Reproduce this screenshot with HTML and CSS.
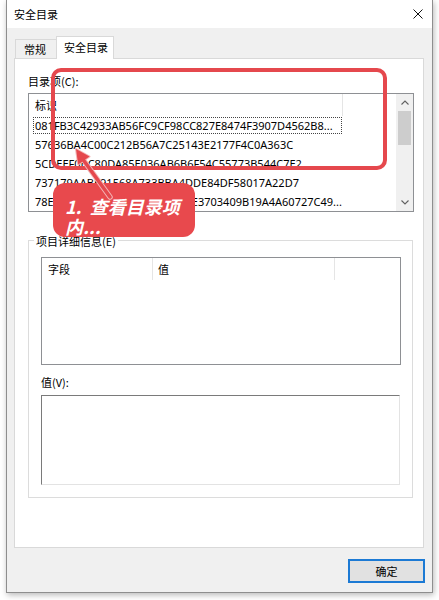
FILE: index.html
```html
<!DOCTYPE html>
<html lang="zh-CN">
<head>
<meta charset="utf-8">
<title>安全目录</title>
<link rel="stylesheet" href="styles.css">
</head>
<body>
<div class="window">
  <div class="titlebar">
    <span class="title">安全目录</span>
    <svg class="close" width="10" height="10" viewBox="0 0 10 10"><path d="M0.5 0.5 L9.5 9.5 M9.5 0.5 L0.5 9.5" stroke="#111" stroke-width="1" fill="none"/></svg>
  </div>
  <div class="client">
    <div class="tabs">
      <div class="tab">常规</div>
      <div class="tab active">安全目录</div>
    </div>
    <div class="panel">
      <div class="label">目录项(C):</div>
      <div class="listbox">
        <div class="lb-main">
          <div class="lb-header">
            <div class="col-id">标识</div>
            <div class="col-rest"></div>
          </div>
          <div class="row focus">081FB3C42933AB56FC9CF98CC827E8474F3907D4562B8...</div>
          <div class="row">57636BA4C00C212B56A7C25143E2177F4C0A363C</div>
          <div class="row">5CDEEF0BC80DA85E036AB6B6F54C55773B544C7E2</div>
          <div class="row">737179AABE91568A733BBA4DDE84DF58017A22D7</div>
          <div class="row">78E5B0F2AC1C04E6A8D2B0A2E3703409B19A4A60727C49...</div>
        </div>
        <div class="vscroll">
          <div class="sb-btn"><svg width="8" height="5" viewBox="0 0 8 5"><path d="M0.5 4.5 L4 1 L7.5 4.5" stroke="#606060" stroke-width="1.1" fill="none"/></svg></div>
          <div class="sb-track"><div class="sb-thumb"></div></div>
          <div class="sb-btn"><svg width="8" height="5" viewBox="0 0 8 5"><path d="M0.5 0.5 L4 4 L7.5 0.5" stroke="#606060" stroke-width="1.1" fill="none"/></svg></div>
        </div>
      </div>
      <div class="group">
        <div class="group-title">项目详细信息(E)</div>
        <div class="details">
          <div class="dt-header">
            <div class="dt-c1">字段</div>
            <div class="dt-c2">值</div>
            <div class="dt-c3"></div>
          </div>
        </div>
        <div class="label value-label">值(V):</div>
        <div class="valuebox"></div>
      </div>
    </div>
    <div class="footer">
      <button class="ok">确定</button>
    </div>
  </div>
</div>

<div class="annot-rect"></div>
<div class="callout">1.&nbsp;&nbsp;查看目录项内...</div>
<svg class="arrow" width="60" height="65" viewBox="0 0 60 65">
  <line x1="50" y1="57" x2="23" y2="19.5" stroke="#f3b5b6" stroke-width="5.5" stroke-linecap="round"/>
  <polygon points="16,9 29.5,16.5 18.2,24.5" fill="#f3b5b6" stroke="#f3b5b6" stroke-width="2" stroke-linejoin="round"/>
  <line x1="50" y1="57" x2="23" y2="19.5" stroke="#e5484d" stroke-width="3.5" stroke-linecap="round"/>
  <polygon points="16,9 29.5,16.5 18.2,24.5" fill="#e5484d"/>
</svg>
</body>
</html>
```

FILE: styles.css
```css
html, body {
  margin: 0;
  padding: 0;
}

body {
  width: 439px;
  height: 600px;
  background: #ffffff;
  position: relative;
  overflow: hidden;
  font-family: "Noto Sans CJK SC", "Noto Sans", sans-serif;
  font-size: 11px;
  color: #000;
}

.window {
  margin-left: 6px;
  width: 427px;
  height: 593px;
  box-sizing: border-box;
  border: 1px solid #8e8e8e;
  border-top: 0;
  background: #f0f0f0;
  box-shadow: 1px 2px 6px rgba(0, 0, 0, 0.28);
  display: flex;
  flex-direction: column;
}

.titlebar {
  height: 28px;
  flex: none;
  background: #ffffff;
  display: flex;
  align-items: center;
  justify-content: space-between;
  padding: 0 9px 0 7px;
}

.title {
  font-size: 11px;
  line-height: 14px;
}

.close {
  display: block;
}

.client {
  flex: 1;
  padding: 8px 8px 0 7px;
}

.tabs {
  height: 22px;
  display: flex;
  align-items: flex-end;
  padding-left: 1px;
}

.tab {
  height: 19px;
  box-sizing: border-box;
  border: 1px solid #d9d9d9;
  border-bottom: 0;
  background: #f0f0f0;
  line-height: 18px;
  padding: 0 9px 0 8px;
  width: 42px;
}

.tab.active {
  width: 58px;
  height: 23px;
  margin-left: -1px;
  margin-bottom: -1px;
  background: #ffffff;
  line-height: 21px;
  padding: 0 0 0 7px;
  position: relative;
  z-index: 1;
}

.panel {
  height: 490px;
  box-sizing: border-box;
  border: 1px solid #d9d9d9;
  background: #ffffff;
  padding: 15px 9px 0 13px;
}

.label {
  line-height: 14px;
  height: 14px;
  white-space: nowrap;
}

.listbox {
  margin-top: 5px;
  height: 119px;
  box-sizing: border-box;
  border: 1px solid #8e9094;
  display: flex;
}

.lb-main {
  flex: 1;
  min-width: 0;
  overflow: hidden;
}

.lb-header {
  height: 22px;
  display: flex;
}

.col-id {
  width: 314px;
  flex: none;
  box-sizing: border-box;
  border-right: 1px solid #e5e5e5;
  padding-left: 6px;
  line-height: 22px;
}

.col-rest {
  flex: 1;
}

.row {
  width: 314px;
  box-sizing: border-box;
  height: 19px;
  line-height: 19px;
  padding-left: 6px;
  white-space: nowrap;
  overflow: hidden;
  font-family: "Noto Sans", sans-serif;
  font-size: 11px;
}

.row.focus {
  margin-left: 3px;
  width: 311px;
  padding-left: 3px;
  outline: 1px dotted #444;
  outline-offset: -2px;
}

.vscroll {
  width: 17px;
  flex: none;
  background: #f0f0f0;
  display: flex;
  flex-direction: column;
}

.sb-btn {
  height: 17px;
  flex: none;
  display: flex;
  align-items: center;
  justify-content: center;
}

.sb-btn svg {
  display: block;
}

.sb-track {
  flex: 1;
}

.sb-thumb {
  margin: 0 2px;
  height: 34px;
  background: #cdcdcd;
}

.group {
  margin-top: 28px;
  margin-right: 1px;
  height: 258px;
  box-sizing: border-box;
  border: 1px solid #dcdcdc;
  padding: 0 11px 0 12px;
}

.group-title {
  display: table;
  line-height: 14px;
  margin: -7px 0 0 -7px;
  padding: 0 2px;
  background: #ffffff;
}

.details {
  margin-top: 9px;
  height: 108px;
  box-sizing: border-box;
  border: 1px solid #8e9094;
}

.dt-header {
  height: 22px;
  display: flex;
  line-height: 22px;
}

.dt-c1 {
  width: 111px;
  flex: none;
  box-sizing: border-box;
  border-right: 1px solid #e5e5e5;
  padding-left: 6px;
}

.dt-c2 {
  width: 182px;
  flex: none;
  box-sizing: border-box;
  border-right: 1px solid #e5e5e5;
  padding-left: 5px;
}

.dt-c3 {
  flex: 1;
}

.value-label {
  margin-top: 10px;
}

.valuebox {
  margin-top: 6px;
  margin-right: 1px;
  height: 90px;
  box-sizing: border-box;
  border-top: 1px solid #7a7a7a;
  border-left: 1px solid #7a7a7a;
  border-right: 1px solid #e3e3e3;
  border-bottom: 1px solid #e3e3e3;
}

.footer {
  display: flex;
  justify-content: flex-end;
  padding-top: 11px;
  margin-right: -1px;
}

.ok {
  width: 77px;
  height: 24px;
  box-sizing: border-box;
  border: 2px solid #1c7ad4;
  background: #e1e1e1;
  font-family: "Noto Sans CJK SC", sans-serif;
  font-size: 11px;
  color: #000;
  padding: 0;
  margin: 0;
}

.annot-rect {
  position: absolute;
  left: 51px;
  top: 68px;
  width: 336px;
  height: 102px;
  box-sizing: border-box;
  border: 4px solid #e5484d;
  border-radius: 10px;
}

.callout {
  position: absolute;
  left: 53px;
  top: 183px;
  width: 142px;
  height: 54px;
  box-sizing: border-box;
  padding: 13px 8px 0 12px;
  background: #e8494d;
  border-radius: 12px;
  color: #ffffff;
  font-family: "Noto Sans CJK SC", sans-serif;
  font-weight: bold;
  font-style: italic;
  font-size: 18px;
  line-height: 20px;
  overflow: hidden;
}

.arrow {
  position: absolute;
  left: 60px;
  top: 140px;
}
```
